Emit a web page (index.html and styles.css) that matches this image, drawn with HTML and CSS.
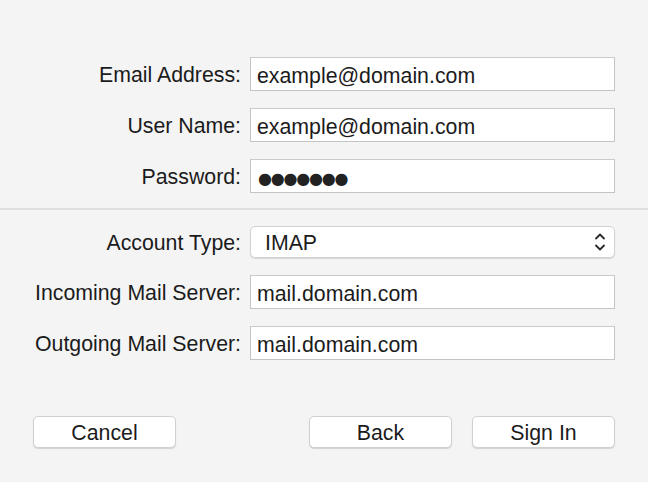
FILE: index.html
```html
<!doctype html>
<html lang="en">
<head>
    <meta charset="UTF-8">
    <title>Add Account</title>
    <link rel="stylesheet" href="styles.css">
</head>
<body>
    <div class="sheet">
        <div class="group top">
            <div class="row">
                <span class="label">Email Address:</span>
                <div class="field">example@domain.com</div>
            </div>
            <div class="row">
                <span class="label">User Name:</span>
                <div class="field">example@domain.com</div>
            </div>
            <div class="row">
                <span class="label">Password:</span>
                <div class="field"><span class="dots">●●●●●●●</span></div>
            </div>
        </div>
        <div class="group bottom">
            <div class="row">
                <span class="label">Account Type:</span>
                <div class="select">
                    <span>IMAP</span>
                    <svg class="arrows" width="12" height="22" viewBox="0 0 12 22">
                        <path d="M2 7.5 L6 3.5 L10 7.5 M2 14.5 L6 18.5 L10 14.5" fill="none" stroke="#2a2a2a" stroke-width="1.8" stroke-linecap="round" stroke-linejoin="round"/>
                    </svg>
                </div>
            </div>
            <div class="row">
                <span class="label">Incoming Mail Server:</span>
                <div class="field">mail.domain.com</div>
            </div>
            <div class="row">
                <span class="label">Outgoing Mail Server:</span>
                <div class="field">mail.domain.com</div>
            </div>
        </div>
        <div class="buttons">
            <button class="btn">Cancel</button>
            <div class="right">
                <button class="btn">Back</button>
                <button class="btn">Sign In</button>
            </div>
        </div>
    </div>
</body>
</html>
```

FILE: styles.css
```css
* {
    margin: 0;
    padding: 0;
    box-sizing: border-box;
}
body {
    background-color: #f4f4f4;
    font: 21.3px "Liberation Sans", Arial, sans-serif;
    color: #1b1b1b;
}
.sheet {
    width: 648px;
    height: 482px;
}
.group {
    display: grid;
    grid-template-columns: 241px 365px;
    column-gap: 9px;
    row-gap: 17px;
    align-items: center;
}
.top {
    padding-top: 57px;
    padding-bottom: 15px;
    border-bottom: 2px solid #dedede;
}
.bottom {
    padding-top: 16px;
}
.row {
    display: contents;
}
.label {
    text-align: right;
    white-space: nowrap;
    padding-top: 3px;
}
.field {
    height: 34px;
    line-height: 32px;
    padding: 2px 6px 0;
    background-color: #fff;
    border: 1px solid #c4c4c4;
    border-top-color: #cbcbcb;
    white-space: nowrap;
}
.dots {
    font-family: "DejaVu Sans", sans-serif;
    font-size: 16px;
    letter-spacing: -1.2px;
    color: #222;
    position: relative;
    top: -1px;
    left: 1px;
}
.select {
    height: 32px;
    display: flex;
    align-items: center;
    justify-content: space-between;
    padding: 2px 8px 0 14px;
    background-color: #fff;
    border: 1px solid #d2d2d2;
    border-radius: 5px;
    box-shadow: 0 1px 1px rgba(0, 0, 0, 0.12);
}
.arrows {
    display: block;
    margin-top: -2px;
}
.buttons {
    display: flex;
    justify-content: space-between;
    padding: 56px 33px 0;
}
.right {
    display: flex;
    gap: 20px;
}
.btn {
    width: 143px;
    height: 32px;
    font: inherit;
    color: #1b1b1b;
    background-color: #fff;
    border: 1px solid #d0d0d0;
    border-radius: 5px;
    box-shadow: 0 1px 1px rgba(0, 0, 0, 0.14);
    padding-top: 2px;
}
```
